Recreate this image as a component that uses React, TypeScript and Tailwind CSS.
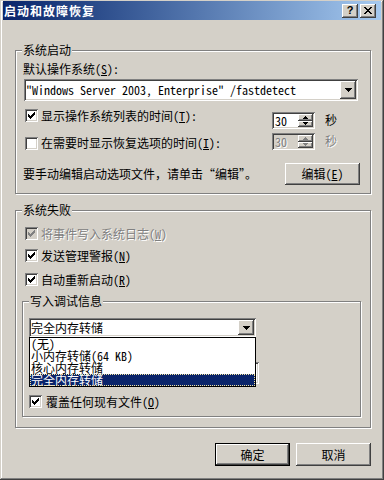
import React from "react";

const sunken =
  "shadow-[inset_1px_1px_0_#808080,inset_-1px_-1px_0_#ffffff,inset_2px_2px_0_#404040,inset_-2px_-2px_0_#d4d0c8]";
const raised =
  "shadow-[inset_-1px_-1px_0_#404040,inset_1px_1px_0_#ffffff,inset_-2px_-2px_0_#808080,inset_2px_2px_0_#d4d0c8]";
const etched =
  "border border-[#808080] shadow-[inset_1px_1px_0_#ffffff,1px_1px_0_#ffffff]";
const emboss = "text-[#808080] [text-shadow:1px_1px_0_#ffffff]";

function Check({ color = "#000" }: { color?: string }) {
  return (
    <svg width="7" height="7" viewBox="0 0 7 7" shapeRendering="crispEdges">
      <path
        fill={color}
        d="M0 2h1v3H0z M1 3h1v3H1z M2 4h1v3H2z M3 3h1v3H3z M4 2h1v3H4z M5 1h1v3H5z M6 0h1v3H6z"
      />
    </svg>
  );
}

function CheckBox({ checked, disabled }: { checked?: boolean; disabled?: boolean }) {
  return (
    <div
      className={`w-[13px] h-[13px] shrink-0 flex items-center justify-center ${sunken} ${
        disabled ? "bg-[#d4d0c8]" : "bg-white"
      }`}
    >
      {checked && <Check color={disabled ? "#808080" : "#000"} />}
    </div>
  );
}

function DownArrow({ color = "#000" }: { color?: string }) {
  return (
    <svg width="7" height="4" viewBox="0 0 7 4" shapeRendering="crispEdges">
      <path fill={color} d="M0 0h7v1H0z M1 1h5v1H1z M2 2h3v1H2z M3 3h1v1H3z" />
    </svg>
  );
}

function SmallArrow({ up, color = "#000" }: { up?: boolean; color?: string }) {
  return (
    <svg width="5" height="3" viewBox="0 0 5 3" shapeRendering="crispEdges">
      <path
        fill={color}
        d={up ? "M2 0h1v1H2z M1 1h3v1H1z M0 2h5v1H0z" : "M0 0h5v1H0z M1 1h3v1H1z M2 2h1v1H2z"}
      />
    </svg>
  );
}

function Spin({ disabled }: { disabled?: boolean }) {
  return (
    <div className={`w-[43px] h-[17px] p-[2px] flex ${sunken} ${disabled ? "bg-[#d4d0c8]" : "bg-white"}`}>
      <div className={`flex-1 pl-[1px] leading-[13px] text-[12px] ${disabled ? emboss : "text-black"}`}>30</div>
      <div className="w-[15px] flex flex-col">
        <div className={`flex-1 bg-[#d4d0c8] flex items-center justify-center ${raised}`}>
          <SmallArrow up color={disabled ? "#808080" : "#000"} />
        </div>
        <div className={`flex-1 bg-[#d4d0c8] flex items-center justify-center ${raised}`}>
          <SmallArrow color={disabled ? "#808080" : "#000"} />
        </div>
      </div>
    </div>
  );
}

function CheckRow({
  children,
  checked,
  disabled,
  className = "",
}: {
  children: React.ReactNode;
  checked?: boolean;
  disabled?: boolean;
  className?: string;
}) {
  return (
    <div className={`flex items-center h-[13px] ${className}`}>
      <CheckBox checked={checked} disabled={disabled} />
      <div className={`ml-[3px] leading-[14px] whitespace-nowrap ${disabled ? emboss : ""}`}>{children}</div>
    </div>
  );
}

const item = "h-[12px] leading-[12px] pl-[1px] whitespace-nowrap";

export default function App() {
  return (
    <div
      className="relative w-[384px] h-[480px] bg-[#d4d0c8] overflow-hidden pt-[1px] text-[12px] text-black font-['Noto_Sans_Mono_CJK_SC','Noto_Sans_CJK_SC',sans-serif] shadow-[inset_-1px_-1px_0_#404040,inset_1px_1px_0_#d4d0c8,inset_-2px_-2px_0_#808080,inset_2px_2px_0_#ffffff]"
    >
      {/* Title bar */}
      <div className="mx-[3px] h-[19px] flex items-center bg-linear-to-r from-[#0a246a] to-[#a6caf0] pr-[5px]">
        <div className="pl-[1px] text-white font-bold tracking-[1px] leading-[14px] text-[12px]">
          启动和故障恢复
        </div>
        <div className="ml-auto flex items-center gap-[2px]">
          <div
            className={`w-[16px] h-[14px] bg-[#d4d0c8] flex items-center justify-center ${raised} font-['Liberation_Sans',sans-serif] font-bold text-[11px] leading-[11px] text-black`}
          >
            ?
          </div>
          <div className={`w-[16px] h-[14px] bg-[#d4d0c8] flex items-center justify-center ${raised}`}>
            <svg width="8" height="7" viewBox="0 0 8 7" shapeRendering="crispEdges">
              <path
                fill="#000"
                d="M0 0h2v1H0z M6 0h2v1H6z M1 1h2v1H1z M5 1h2v1H5z M2 2h4v1H2z M3 3h2v1H3z M2 4h4v1H2z M1 5h2v1H1z M5 5h2v1H5z M0 6h2v1H0z M6 6h2v1H6z"
              />
            </svg>
          </div>
        </div>
      </div>

      {/* Group 1 */}
      <fieldset className={`ml-[15px] mt-[23px] w-[356px] pb-[8px] ${etched}`}>
        <legend className="ml-[6px] px-[1px] h-[14px] leading-[14px] bg-[#d4d0c8]">系统启动</legend>
        <div className="mt-[5px] ml-[7px] h-[14px] leading-[14px]">
          默认操作系统(<u>S</u>):
        </div>
        <div className={`mt-[3px] ml-[8px] w-[334px] h-[22px] p-[2px] flex bg-white ${sunken}`}>
          <div className="flex-1 pl-[0px] flex items-center font-['Noto_Sans_Mono_CJK_SC','Liberation_Mono',monospace] text-[12px] whitespace-nowrap">
            "Windows Server 2003, Enterprise" /fastdetect
          </div>
          <div className={`w-[16px] h-full bg-[#d4d0c8] flex items-center justify-center ${raised}`}>
            <DownArrow />
          </div>
        </div>

        <div className="mt-[6px] ml-[9px] h-[24px] flex items-start">
          <div className="mt-[2px]">
            <CheckBox checked />
          </div>
          <div className="ml-[3px] mt-[2px] w-[231px] leading-[14px] whitespace-nowrap">
            显示操作系统列表的时间(<u>T</u>):
          </div>
          <div className="mt-[5px]">
            <Spin />
          </div>
          <div className="ml-[10px] mt-[6px] leading-[14px]">秒</div>
        </div>

        <div className="ml-[9px] h-[21px] flex items-start">
          <div className="mt-[6px]">
            <CheckBox />
          </div>
          <div className="ml-[3px] mt-[5px] w-[231px] leading-[14px] whitespace-nowrap">
            在需要时显示恢复选项的时间(<u>I</u>):
          </div>
          <div className="mt-[2px]">
            <Spin disabled />
          </div>
          <div className={`ml-[10px] mt-[3px] leading-[14px] ${emboss}`}>秒</div>
        </div>

        <div className="mt-[11px] h-[22px] flex items-center">
          <div className="ml-[7px] w-[262px] leading-[14px] whitespace-nowrap">
            要手动编辑启动选项文件，请单击“编辑”。
          </div>
          <div className={`w-[75px] h-[22px] flex items-center justify-center bg-[#d4d0c8] ${raised}`}>
            编辑(<u>E</u>)
          </div>
        </div>
      </fieldset>

      {/* Group 2 */}
      <fieldset className={`ml-[15px] mt-[9px] w-[356px] pb-[10px] ${etched}`}>
        <legend className="ml-[6px] px-[1px] h-[14px] leading-[14px] bg-[#d4d0c8]">系统失败</legend>
        <CheckRow checked disabled className="mt-[10px] ml-[9px]">
          将事件写入系统日志(<u>W</u>)
        </CheckRow>
        <CheckRow checked className="mt-[9px] ml-[9px]">
          发送管理警报(<u>N</u>)
        </CheckRow>
        <CheckRow checked className="mt-[11px] ml-[9px]">
          自动重新启动(<u>R</u>)
        </CheckRow>

        <fieldset className={`ml-[6px] mt-[8px] w-[339px] pb-[8px] ${etched}`}>
          <legend className="ml-[6px] px-[1px] h-[14px] leading-[14px] bg-[#d4d0c8]">写入调试信息</legend>

          <div className="relative mt-[10px] ml-[6px] w-[227px]">
            <div className={`h-[19px] p-[2px] flex bg-white ${sunken}`}>
              <div className="flex-1 flex items-center leading-[14px] whitespace-nowrap">完全内存转储</div>
              <div className={`w-[16px] h-full bg-[#d4d0c8] flex items-center justify-center ${raised}`}>
                <DownArrow />
              </div>
            </div>
            <div className="absolute left-0 top-[19px] z-10 w-[227px] h-[50px] border border-black bg-white flex flex-col">
              <div className={item}>(无)</div>
              <div className={item}>小内存转储(64 KB)</div>
              <div className={item}>核心内存转储</div>
              <div
                className={`${item} bg-[#0a246a] text-white outline outline-1 outline-dotted outline-offset-[-1px] outline-[#f5e6a0]`}
              >
                完全内存转储
              </div>
            </div>
          </div>

          <div className={`mt-[25px] ml-[6px] w-[230px] h-[22px] p-[2px] bg-white ${sunken}`} />

          <div className="mt-[11px] ml-[6px] flex items-center h-[13px]">
            <CheckBox checked />
            <div className="ml-[4px] leading-[14px] whitespace-nowrap">
              覆盖任何现有文件(<u>O</u>)
            </div>
          </div>
        </fieldset>
      </fieldset>

      {/* Buttons */}
      <div className="mt-[15px] pr-[13px] flex justify-end gap-[6px]">
        <div className={`w-[75px] h-[23px] border border-black bg-[#d4d0c8] flex items-center justify-center ${raised}`}>
          确定
        </div>
        <div className={`w-[75px] h-[23px] bg-[#d4d0c8] flex items-center justify-center ${raised}`}>取消</div>
      </div>
    </div>
  );
}
